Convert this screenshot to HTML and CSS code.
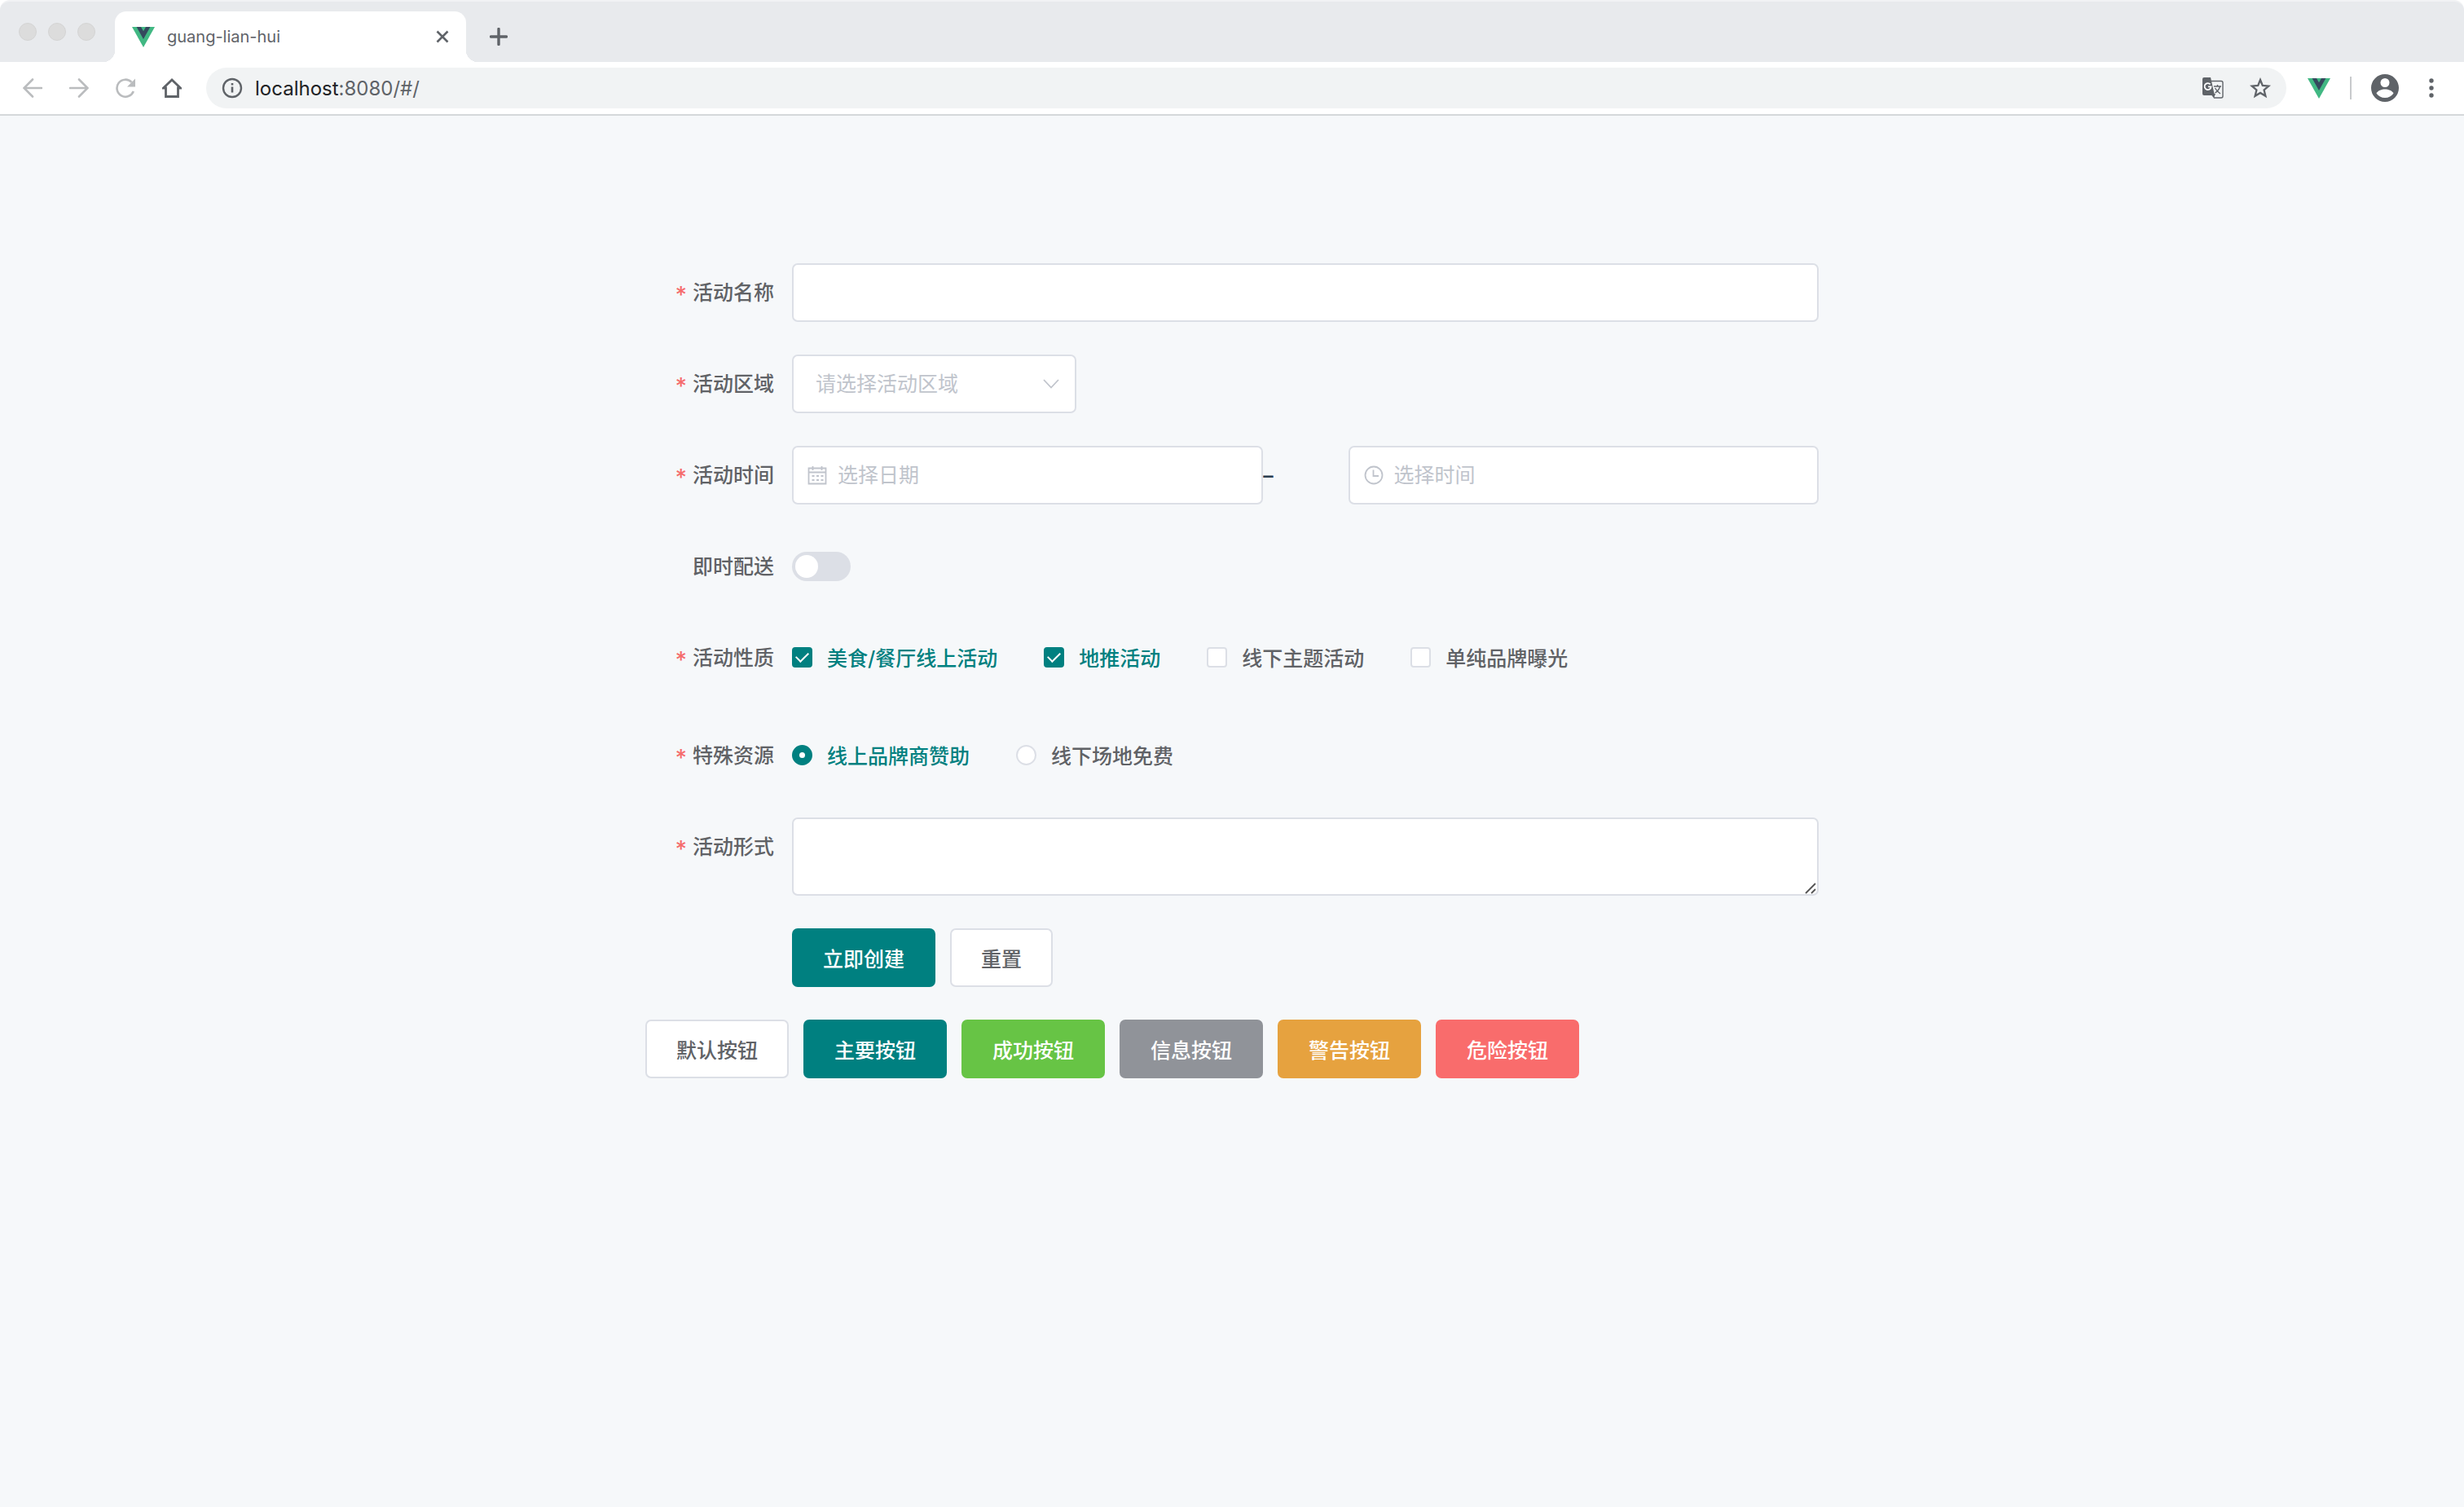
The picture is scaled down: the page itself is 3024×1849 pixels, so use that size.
FILE: index.html
```html
<!DOCTYPE html>
<html lang="zh-CN">
<head>
  <meta charset="UTF-8" />
  <meta name="viewport" content="width=device-width, initial-scale=1.0" />
  <title>guang-lian-hui</title>
  <link rel="stylesheet" href="styles.css">
</head>
<body>

  <header class="browser">
    <div class="tab-bar">
      <div class="window-dots"><span></span><span></span><span></span></div>
      <div class="tab">
        <svg class="vue-logo" viewBox="0 0 28 25"><path fill="#41b883" d="M0 0h28L14 25z"/><path fill="#35495e" d="M5.600 0h5.400l3 5.200L17 0h5.400L14 15z"/></svg>
        <span class="tab-title">guang-lian-hui</span>
        <button class="icon-btn tab-close" aria-label="关闭">
          <svg width="16" height="16" viewBox="0 0 16 16"><path d="M1.500 1.500l13 13M14.500 1.500l-13 13" stroke="#5f6368" stroke-width="2.600" fill="none"/></svg>
        </button>
      </div>
      <button class="icon-btn new-tab" aria-label="新标签页">
        <svg width="22" height="22" viewBox="0 0 22 22"><path d="M11 1.500v19M1.500 11h19" stroke="#5f6368" stroke-width="3.400" stroke-linecap="round" fill="none"/></svg>
      </button>
    </div>

    <div class="toolbar">
      <div class="nav-buttons">
        <button class="icon-btn" aria-label="后退">
          <svg width="24" height="24" viewBox="0 0 24 24"><path d="M23 12H2M12 1.500L1.500 12 12 22.500" stroke="#babcbe" stroke-width="2.600" stroke-linecap="round" fill="none"/></svg>
        </button>
        <button class="icon-btn" aria-label="前进">
          <svg width="24" height="24" viewBox="0 0 24 24"><path d="M1 12h21M12 1.500L22.500 12 12 22.500" stroke="#babcbe" stroke-width="2.600" stroke-linecap="round" fill="none"/></svg>
        </button>
        <button class="icon-btn" aria-label="重新加载">
          <svg width="24" height="24" viewBox="0 0 24 24"><path d="M21.800 16A10.500 10.500 0 1 1 19.500 4.800" stroke="#babcbe" stroke-width="2.600" fill="none"/><path fill="#babcbe" d="M24 .500V10.500H14z"/></svg>
        </button>
        <button class="icon-btn" aria-label="主页">
          <svg width="24" height="24" viewBox="0 0 24 24"><path d="M1.500 12L12 2l10.500 10H19.500v10.500h-15V12z" stroke="#5f6368" stroke-width="2.800" fill="none"/></svg>
        </button>
      </div>
      <div class="address-bar">
        <svg width="26" height="26" viewBox="0 0 26 26"><circle cx="13" cy="13" r="11" stroke="#5f6368" stroke-width="2.400" fill="none"/><path d="M13 11.500v7M13 7v2.600" stroke="#5f6368" stroke-width="2.600"/></svg>
        <div class="url">localhost<span>:8080/#/</span></div>
        <button class="icon-btn" aria-label="翻译">
          <svg width="26" height="26" viewBox="0 0 26 26">
            <path fill="#5f6368" d="M2 0h8l5 22H2a2 2 0 0 1-2-2V2a2 2 0 0 1 2-2z"/>
            <path d="M11 4.500h12a2 2 0 0 1 2 2V23a2 2 0 0 1-2 2h-9" stroke="#5f6368" stroke-width="1.400" fill="none"/>
            <path fill="#5f6368" d="M10 20h6l-2 5.500z"/>
            <path d="M9.600 8.400A4 4 0 1 0 10.600 11.400H7" stroke="#fff" stroke-width="1.800" fill="none"/>
            <path d="M14 11h9M18.500 9v2M21.500 11c-1 4-3 6-6 8M15.500 13c1.500 3 3.500 5 6.500 7" stroke="#5f6368" stroke-width="1.400" fill="none"/>
          </svg>
        </button>
        <button class="icon-btn" aria-label="收藏">
          <svg width="26" height="26" viewBox="0 0 26 26"><path d="M13 3l2.800 7 7.500.600-5.700 4.900 1.800 7.300L13 18.900l-6.400 3.900 1.800-7.300-5.700-4.900 7.500-.600z" stroke="#5f6368" stroke-width="2.300" fill="none"/></svg>
        </button>
      </div>
      <div class="extensions">
        <svg class="vue-logo" viewBox="0 0 28 25"><path fill="#41b883" d="M0 0h28L14 25z"/><path fill="#35495e" d="M5.600 0h5.400l3 5.200L17 0h5.400L14 15z"/></svg>
        <span class="divider"></span>
        <button class="icon-btn avatar" aria-label="用户">
          <svg width="34" height="34" viewBox="0 0 34 34"><circle cx="17" cy="17" r="17" fill="#5f6368"/><circle cx="17" cy="10.500" r="5.500" fill="#fff"/><path fill="#fff" d="M6.500 23.500c2-3.600 6.500-5 10.500-5s8.500 1.400 10.500 5c-2.200 3.500-6.200 5.500-10.500 5.500s-8.300-2-10.500-5.500z"/></svg>
        </button>
        <button class="icon-btn" aria-label="更多">
          <svg width="6" height="24" viewBox="0 0 6 24" fill="#5f6368"><circle cx="3" cy="3" r="2.700"/><circle cx="3" cy="12" r="2.700"/><circle cx="3" cy="21" r="2.700"/></svg>
        </button>
      </div>
    </div>
  </header>

  <main class="page">
    <form class="form" onsubmit="return false">
      <div class="form-item required">
        <label class="form-label" for="name">活动名称</label>
        <div class="form-content"><input class="input" type="text" id="name"></div>
      </div>

      <div class="form-item required">
        <label class="form-label" for="region">活动区域</label>
        <div class="form-content">
          <div class="select-box">
            <select class="input" id="region">
              <option value="">请选择活动区域</option>
            </select>
            <svg class="arrow" width="20" height="12" viewBox="0 0 20 12"><path d="M1 1l9 9.500L19 1" stroke="#c0c4cc" stroke-width="1.800" fill="none"/></svg>
          </div>
        </div>
      </div>

      <div class="form-item required">
        <label class="form-label" for="date">活动时间</label>
        <div class="form-content date-row">
          <div class="picker">
            <svg class="picker-icon" width="24" height="24" viewBox="0 0 24 24" stroke="#c0c4cc" stroke-width="1.800" fill="none"><path d="M1.500 3.500h21v19h-21zM1.500 8.500h21M6.500 1v5M17.500 1v5"/><path stroke-dasharray="3 2.500" d="M5.500 13h14M5.500 18h14"/></svg>
            <input class="input" type="text" id="date" placeholder="选择日期">
          </div>
          <div class="line">–</div>
          <div class="picker">
            <svg class="picker-icon" width="24" height="24" viewBox="0 0 24 24" stroke="#c0c4cc" stroke-width="1.800" fill="none"><circle cx="12" cy="12" r="10.500"/><path d="M11.500 5.500v7.500h6.500"/></svg>
            <input class="input" type="text" id="time" placeholder="选择时间" aria-label="选择时间">
          </div>
        </div>
      </div>

      <div class="form-item">
        <label class="form-label" for="delivery">即时配送</label>
        <div class="form-content"><input class="switch" type="checkbox" id="delivery"></div>
      </div>

      <div class="form-item required type-item">
        <span class="form-label">活动性质</span>
        <div class="form-content options">
          <label class="option"><input class="checkbox" type="checkbox" checked><span>美食/餐厅线上活动</span></label>
          <label class="option"><input class="checkbox" type="checkbox" checked><span>地推活动</span></label>
          <label class="option"><input class="checkbox" type="checkbox"><span>线下主题活动</span></label>
          <label class="option"><input class="checkbox" type="checkbox"><span>单纯品牌曝光</span></label>
        </div>
      </div>

      <div class="form-item required">
        <span class="form-label">特殊资源</span>
        <div class="form-content options">
          <label class="option"><input class="radio" type="radio" name="resource" checked><span>线上品牌商赞助</span></label>
          <label class="option"><input class="radio" type="radio" name="resource"><span>线下场地免费</span></label>
        </div>
      </div>

      <div class="form-item required">
        <label class="form-label" for="desc">活动形式</label>
        <div class="form-content textarea-box">
          <textarea class="input textarea" id="desc"></textarea>
          <svg class="grip" width="16" height="16" viewBox="0 0 16 16"><path d="M2 14L14 2M9 14l5-5" stroke="#555" stroke-width="1.800" fill="none"/></svg>
        </div>
      </div>

      <div class="form-item">
        <span class="form-label"></span>
        <div class="form-content buttons">
          <button class="btn btn-primary" type="submit">立即创建</button>
          <button class="btn" type="reset">重置</button>
        </div>
      </div>
    </form>

    <div class="buttons">
      <button class="btn">默认按钮</button>
      <button class="btn btn-primary">主要按钮</button>
      <button class="btn btn-success">成功按钮</button>
      <button class="btn btn-info">信息按钮</button>
      <button class="btn btn-warning">警告按钮</button>
      <button class="btn btn-danger">危险按钮</button>
    </div>
  </main>

</body>
</html>
```
FILE: styles.css
```css
* {
  box-sizing: border-box;
}

body {
  margin: 0;
  min-height: 100vh;
  font-family: Inter, "Noto Sans CJK SC", sans-serif;
  font-size: 25px;
  color: #2c3e50;
  background-color: #f6f8fa;
}

button, input, select, textarea {
  font: inherit;
  margin: 0;
}

svg {
  display: block;
  flex-shrink: 0;
}

/* browser chrome */
.browser {
  background-color: #fff;
  border-bottom: 2px solid #d5d8da;
}

.icon-btn {
  display: flex;
  padding: 0;
  border: none;
  background: none;
  cursor: pointer;
}

.vue-logo {
  width: 28px;
  height: 25px;
}

.tab-bar {
  display: flex;
  align-items: center;
  height: 76px;
  padding-left: 23px;
  background-color: #e8eaed;
  border-top: 2px solid #f1f2f4;
  border-radius: 12px 12px 0 0;
}

.window-dots {
  display: flex;
  gap: 14px;
  width: 118px;
}

.window-dots span {
  width: 22px;
  height: 22px;
  border-radius: 50%;
  background-color: #dcdcdc;
  border: 1px solid #d4d4d4;
}

.tab {
  position: relative;
  display: flex;
  align-items: center;
  align-self: flex-end;
  width: 431px;
  height: 62px;
  padding: 0 21px;
  background-color: #fff;
  border-radius: 14px 14px 0 0;
}

/* curved feet of the tab */
.tab::before,
.tab::after {
  content: "";
  position: absolute;
  bottom: 0;
  width: 14px;
  height: 14px;
}

.tab::before {
  left: -14px;
  background: radial-gradient(circle at 0 0, transparent 14px, #fff 14px);
}

.tab::after {
  right: -14px;
  background: radial-gradient(circle at 100% 0, transparent 14px, #fff 14px);
}

.tab-title {
  flex: 1;
  padding-left: 15px;
  font-size: 20px;
  color: #5f6368;
}

.new-tab {
  margin: 12px 0 0 29px;
}

.toolbar {
  display: flex;
  align-items: center;
  height: 64px;
  padding: 0 37px 0 28px;
}

.nav-buttons {
  display: flex;
  gap: 33px;
  width: 225px;
}

.address-bar {
  display: flex;
  flex: 1;
  align-items: center;
  gap: 32px;
  height: 50px;
  padding: 0 19px;
  border-radius: 25px;
  background-color: #f1f3f4;
}

.url {
  flex: 1;
  margin-left: -17px;
  font-size: 24px;
  color: #202124;
}

.url span {
  color: #5f6368;
}

.extensions {
  display: flex;
  align-items: center;
  gap: 24px;
  padding-left: 26px;
}

.divider {
  width: 2px;
  height: 28px;
  background-color: #c8cacc;
}

.avatar {
  margin-right: 13px;
}

/* form */
.page {
  width: 1440px;
  max-width: 100%;
  margin: 0 auto;
  padding: 181px 0 60px;
}

.form-item {
  display: flex;
  margin-bottom: 40px;
}

.form-label {
  width: 180px;
  padding-right: 22px;
  line-height: 72px;
  text-align: right;
  font-weight: 500;
  color: #606266;
}

.required .form-label::before {
  content: "*";
  margin-right: 7px;
  font-size: 28px;
  line-height: 1;
  vertical-align: -4px;
  color: #f56c6c;
}

.form-content {
  flex: 1;
}

.input {
  display: block;
  width: 100%;
  height: 72px;
  padding: 0 27px;
  border: 2px solid #dcdfe6;
  border-radius: 7px;
  outline: none;
  background-color: #fff;
  color: #606266;
}

.input:focus {
  border-color: #008080;
}

.input::placeholder {
  color: #c0c4cc;
}

.select-box {
  position: relative;
  width: 349px;
}

.select-box select {
  appearance: none;
  color: #c0c4cc;
}

.arrow {
  position: absolute;
  top: 30px;
  right: 21px;
  pointer-events: none;
}

.date-row {
  display: grid;
  grid-template-columns: 11fr 2fr 11fr;
}

.line {
  line-height: 72px;
  font-family: "Liberation Sans", sans-serif;
  font-weight: bold;
}

.picker {
  position: relative;
}

.picker .input {
  padding-left: 54px;
}

.picker-icon {
  position: absolute;
  top: 24px;
  left: 19px;
}

.switch {
  appearance: none;
  display: block;
  width: 72px;
  height: 36px;
  margin: 18px 0;
  padding: 4px;
  border-radius: 18px;
  background-color: #dcdfe6;
  cursor: pointer;
}

.switch::before {
  content: "";
  display: block;
  width: 28px;
  height: 28px;
  border-radius: 50%;
  background-color: #fff;
}

.switch:checked {
  background-color: #008080;
}

.switch:checked::before {
  margin-left: 36px;
}

.type-item {
  height: 80px;
}

.options {
  display: flex;
  gap: 57px;
}

.option {
  display: flex;
  align-items: center;
  gap: 18px;
  height: 70px;
  font-weight: 500;
  color: #606266;
  cursor: pointer;
}

.checkbox,
.radio {
  appearance: none;
  display: flex;
  align-items: center;
  justify-content: center;
  width: 25px;
  height: 25px;
  border: 2px solid #dcdfe6;
  border-radius: 4px;
  background-color: #fff;
}

.radio {
  border-radius: 50%;
}

.checkbox:checked,
.radio:checked {
  border-color: #008080;
  background-color: #008080;
}

.checkbox:checked::before {
  content: "";
  width: 7px;
  height: 13px;
  margin-bottom: 4px;
  border: solid #fff;
  border-width: 0 2px 2px 0;
  transform: rotate(45deg);
}

.radio:checked::before {
  content: "";
  width: 7px;
  height: 7px;
  border-radius: 50%;
  background-color: #fff;
}

:checked + span {
  color: #008080;
}

.textarea-box {
  position: relative;
}

.textarea {
  height: 96px;
  padding: 9px 27px;
  resize: none;
}

.grip {
  position: absolute;
  right: 2px;
  bottom: 1px;
}

.buttons {
  display: flex;
  gap: 18px;
}

.btn {
  height: 72px;
  padding: 0 36px;
  border: 2px solid #dcdfe6;
  border-radius: 7px;
  background-color: #fff;
  color: #606266;
  font-weight: 500;
  cursor: pointer;
}

.btn-primary,
.btn-success,
.btn-info,
.btn-warning,
.btn-danger {
  color: #fff;
}

.btn-primary {
  background-color: #008080;
  border-color: #008080;
}

.btn-success {
  background-color: #67c445;
  border-color: #67c445;
}

.btn-info {
  background-color: #909399;
  border-color: #909399;
}

.btn-warning {
  background-color: #e6a23f;
  border-color: #e6a23f;
}

.btn-danger {
  background-color: #f96c6c;
  border-color: #f96c6c;
}
```
